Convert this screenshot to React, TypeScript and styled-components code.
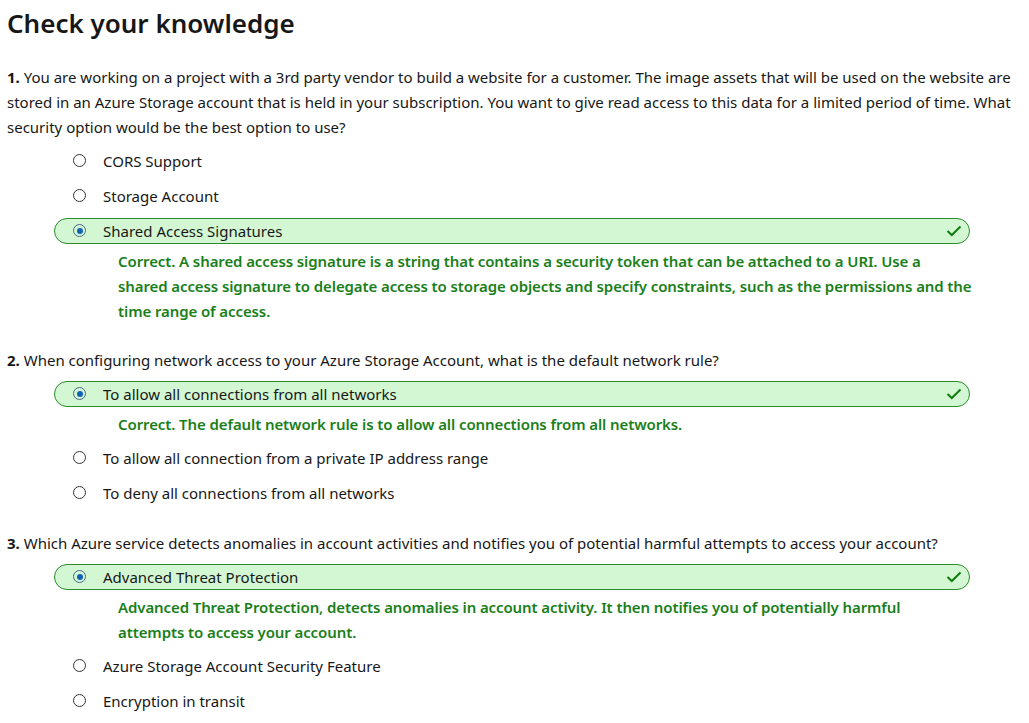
import React from "react";
import styled, { createGlobalStyle } from "styled-components";

const Global = createGlobalStyle`
  html, body { margin: 0; padding: 0; background: #ffffff; }
  body { font-family: "Noto Sans", "Open Sans", sans-serif; color: #171717; }
`;

const Page = styled.div`
  padding: 5px 0 0 7px;
  width: 1022px;
  box-sizing: border-box;
`;

const Title = styled.h1`
  margin: 0 0 24px 0;
  font-size: 26px;
  line-height: 36px;
  font-weight: 600;
  color: #171717;
`;

const QuestionBlock = styled.section`
  margin-bottom: 21px;
`;

const QuestionText = styled.p`
  margin: 0 0 3px 0;
  font-size: 15px;
  line-height: 25px;
  white-space: nowrap;
`;

const Num = styled.span`
  font-weight: 700;
`;

const OptionList = styled.div`
  display: flex;
  flex-direction: column;
  padding-left: 47px;
  width: 916px;
`;

const OptionRow = styled.div<{ $selected?: boolean }>`
  display: flex;
  align-items: center;
  height: 26px;
  margin: 4.5px 0;
  padding: 0 7px 0 18px;
  box-sizing: border-box;
  border-radius: 13px;
  border: 1px solid ${(p) => (p.$selected ? "#2b8a2b" : "transparent")};
  background: ${(p) => (p.$selected ? "#d3f7d3" : "transparent")};
  font-size: 15px;
`;

const Radio = styled.span<{ $checked?: boolean }>`
  width: 13px;
  height: 13px;
  border-radius: 50%;
  box-sizing: border-box;
  border: 1px solid ${(p) => (p.$checked ? "#4a6a8c" : "#333333")};
  display: flex;
  align-items: center;
  justify-content: center;
  flex: none;
  margin-right: 17px;
  &::after {
    content: "";
    display: ${(p) => (p.$checked ? "block" : "none")};
    width: 6px;
    height: 6px;
    border-radius: 50%;
    background: #0f62b4;
  }
`;

const Label = styled.span`
  flex: 1;
  line-height: 20px;
`;

const Check = styled.svg`
  width: 16px;
  height: 16px;
  flex: none;
`;

const Explanation = styled.p`
  margin: 1px 0 3px 64px;
  font-size: 15px;
  line-height: 25px;
  font-weight: 600;
  letter-spacing: -0.1px;
  color: #1a7f1a;
  white-space: nowrap;
`;

type Opt = { text: string; correct?: boolean; note?: React.ReactNode };
type Q = { n: number; text: React.ReactNode; options: Opt[] };

const questions: Q[] = [
  {
    n: 1,
    text: (
      <>
        You are working on a project with a 3rd party vendor to build a website for a customer. The image assets that will be used on the website are
        <br />
        stored in an Azure Storage account that is held in your subscription. You want to give read access to this data for a limited period of time. What
        <br />
        security option would be the best option to use?
      </>
    ),
    options: [
      { text: "CORS Support" },
      { text: "Storage Account" },
      {
        text: "Shared Access Signatures",
        correct: true,
        note: (
          <>
            Correct. A shared access signature is a string that contains a security token that can be attached to a URI. Use a
            <br />
            shared access signature to delegate access to storage objects and specify constraints, such as the permissions and the
            <br />
            time range of access.
          </>
        ),
      },
    ],
  },
  {
    n: 2,
    text: "When configuring network access to your Azure Storage Account, what is the default network rule?",
    options: [
      {
        text: "To allow all connections from all networks",
        correct: true,
        note: "Correct. The default network rule is to allow all connections from all networks.",
      },
      { text: "To allow all connection from a private IP address range" },
      { text: "To deny all connections from all networks" },
    ],
  },
  {
    n: 3,
    text: "Which Azure service detects anomalies in account activities and notifies you of potential harmful attempts to access your account?",
    options: [
      {
        text: "Advanced Threat Protection",
        correct: true,
        note: (
          <>
            Advanced Threat Protection, detects anomalies in account activity. It then notifies you of potentially harmful
            <br />
            attempts to access your account.
          </>
        ),
      },
      { text: "Azure Storage Account Security Feature" },
      { text: "Encryption in transit" },
    ],
  },
];

export default function App() {
  return (
    <Page>
      <Global />
      <Title>Check your knowledge</Title>
      {questions.map((q) => (
        <QuestionBlock key={q.n}>
          <QuestionText>
            <Num>{q.n}.</Num> {q.text}
          </QuestionText>
          <OptionList>
            {q.options.map((o) => (
              <React.Fragment key={o.text}>
                <OptionRow $selected={o.correct}>
                  <Radio $checked={o.correct} />
                  <Label>{o.text}</Label>
                  {o.correct && (
                    <Check viewBox="0 0 16 16">
                      <path d="M1.5 8 L5.8 12 L14.5 3.5" fill="none" stroke="#107c10" strokeWidth="2" />
                    </Check>
                  )}
                </OptionRow>
                {o.note && <Explanation>{o.note}</Explanation>}
              </React.Fragment>
            ))}
          </OptionList>
        </QuestionBlock>
      ))}
    </Page>
  );
}
